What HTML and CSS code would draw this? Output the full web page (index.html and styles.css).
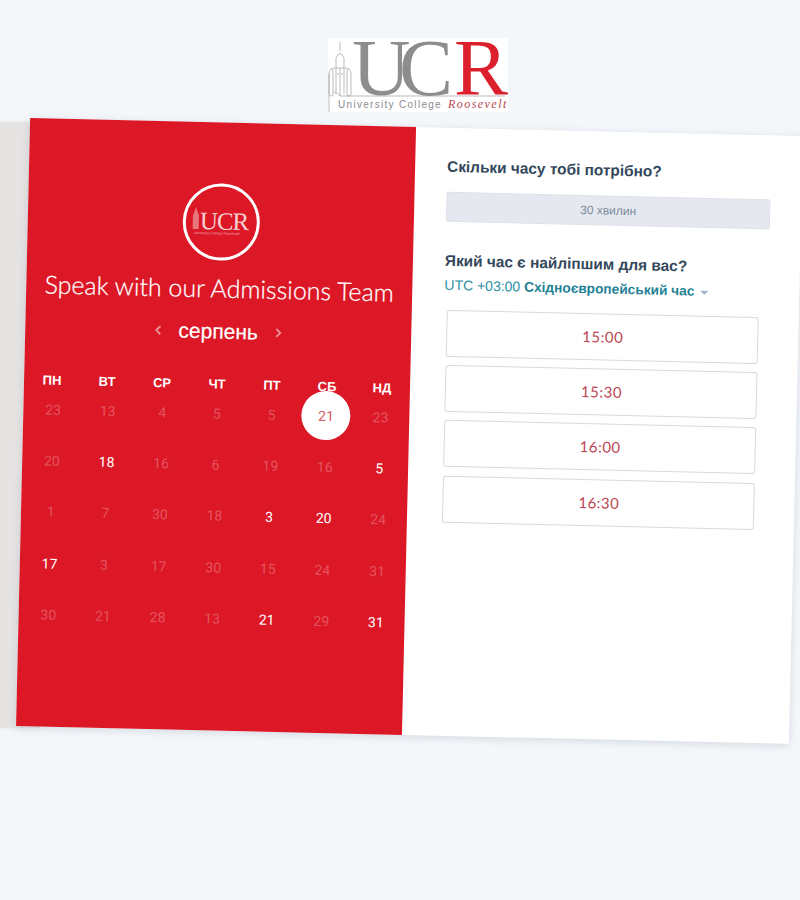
FILE: index.html
```html
<!DOCTYPE html>
<html lang="uk">
<head>
<meta charset="utf-8">
<title>Speak with our Admissions Team</title>
<link rel="stylesheet" href="styles.css">
</head>
<body>
<div class="side-band"></div>
<header class="logo-row">
  <svg class="logo" viewBox="0 0 180 74" width="180" height="74" aria-label="University College Roosevelt">
    <rect width="180" height="74" fill="#fff"/>
    <g fill="none" stroke="#a9a9ab" stroke-width="0.8">
      <path d="M1 74V36M12 4V13M8 20Q12 11 16 20M8 20V30M16 20V30M5 30H19M4 30Q1 32 1 36V56Q1 58 3 58Q5 58 5 56V36Q5 32 4 30M20 30Q23 32 23 36V56Q23 58 21 58Q19 58 19 56V36Q19 32 20 30M8 30V56M12 30V58M16 30V56M9 36H11M13 36H15M6 54Q10 55 12 58H177"/>
    </g>
    <g class="logo-big">
      <text x="24" y="57" class="logo-grey">U</text>
      <text x="71" y="57" class="logo-grey">C</text>
      <text x="126" y="57" class="logo-red">R</text>
    </g>
    <text x="10" y="70" class="logo-small">University College</text>
    <text x="120" y="70" class="logo-script">Roosevelt</text>
  </svg>
</header>
<main class="card">
  <section class="left">
    <div class="avatar">
      <svg viewBox="0 0 71 71" width="71" height="71" aria-hidden="true">
        <path d="M7 43V30Q7 28 8 27L10 21L12 27Q13 28 13 30V43Z" fill="#e8767d"/>
        <text x="14" y="43" class="mini-big">UCR</text>
        <text x="8" y="48" class="mini-small">University College Roosevelt</text>
      </svg>
    </div>
    <h1 class="title">Speak with our Admissions Team</h1>
    <div class="month-row">
      <svg class="chev" viewBox="0 0 8 12" width="8" height="12"><path d="M6 2L2 6L6 10"/></svg>
      <span class="month">серпень</span>
      <svg class="chev" viewBox="0 0 8 12" width="8" height="12"><path d="M2 2L6 6L2 10"/></svg>
    </div>
    <div class="weekdays">
      <span>ПН</span><span>ВТ</span><span>СР</span><span>ЧТ</span><span>ПТ</span><span>СБ</span><span>НД</span>
    </div>
    <div class="days">
      <span>23</span><span>13</span><span>4</span><span>5</span><span>5</span><span class="selected"><i>21</i></span><span>23</span>
      <span>20</span><span class="on">18</span><span>16</span><span>6</span><span>19</span><span>16</span><span class="on">5</span>
      <span>1</span><span>7</span><span>30</span><span>18</span><span class="on">3</span><span class="on">20</span><span>24</span>
      <span class="on">17</span><span>3</span><span>17</span><span>30</span><span>15</span><span>24</span><span>31</span>
      <span>30</span><span>21</span><span>28</span><span>13</span><span class="on">21</span><span>29</span><span class="on">31</span>
    </div>
  </section>
  <section class="right">
    <h2 class="q q-first">Скільки часу тобі потрібно?</h2>
    <div class="duration">30 хвилин</div>
    <h2 class="q q-second">Який час є найліпшим для вас?</h2>
    <div class="tz">UTC +03:00 <b>Східноєвропейський час</b><span class="caret"></span></div>
    <div class="slots">
      <div class="slot">15:00</div>
      <div class="slot">15:30</div>
      <div class="slot">16:00</div>
      <div class="slot">16:30</div>
    </div>
  </section>
</main>
</body>
</html>
```

FILE: styles.css
```css
html, body {
  margin: 0;
  height: 900px;
  overflow: hidden;
}
body {
  background: #f4f7fa;
  font-family: "Liberation Sans", Arial, sans-serif;
  position: relative;
}
.side-band {
  position: absolute;
  left: 0;
  top: 122px;
  width: 40px;
  height: 606px;
  background: #e6e3e3;
  box-shadow: 0 0 4px #e6e3e3;
}
.logo-row {
  display: flex;
  justify-content: center;
  padding: 38px 0 0 36px;
  height: 74px;
}
.logo {
  display: block;
  overflow: visible;
}
.logo-big text {
  font-family: "Liberation Serif", serif;
  font-size: 81px;
}
.logo-grey { fill: #8d8d90; }
.logo-red { fill: #dc1f2c; }
.logo-small {
  font-family: "Liberation Sans", sans-serif;
  font-size: 10px;
  letter-spacing: 1.3px;
  fill: #8b8b8e;
}
.logo-script {
  font-family: "Liberation Serif", serif;
  font-style: italic;
  font-size: 12px;
  letter-spacing: 1.45px;
  fill: #b9474e;
}
.card {
  position: relative;
  display: flex;
  width: 773px;
  height: 608px;
  margin: 15px 0 0 22.5px;
  transform: rotate(1.33deg);
  background: #fff;
  box-shadow: 0 2px 8px rgba(66, 91, 118, 0.18);
  border-radius: 0 0 2px 2px;
}
.left {
  width: 386px;
  background: #dc1726;
  color: #fff;
  padding-top: 61px;
  box-sizing: border-box;
}
.avatar {
  width: 71px;
  height: 71px;
  margin: 0 auto;
  border: 3px solid #fff;
  border-radius: 50%;
}
.avatar svg { display: block; }
.mini-big {
  font-family: "Liberation Serif", serif;
  font-size: 25px;
  letter-spacing: -1px;
  fill: #f6cfd1;
}
.mini-small {
  font-family: "Liberation Sans", sans-serif;
  font-size: 3.6px;
  fill: #f0a5aa;
}
.title {
  margin: 12px 0 0;
  font-family: Lato, sans-serif;
  font-weight: 300;
  font-size: 25px;
  line-height: 30px;
  text-align: center;
  white-space: nowrap;
  -webkit-text-stroke: 0.25px #fff;
}
.month-row {
  display: flex;
  justify-content: center;
  align-items: center;
  gap: 15px;
  margin-top: 14px;
  height: 30px;
}
.month {
  font-size: 21px;
  width: 82px;
  text-align: center;
  -webkit-text-stroke: 0.2px #fff;
}
.chev {
  fill: none;
  stroke: #f08a92;
  stroke-width: 2;
}
.weekdays, .days {
  display: grid;
  text-align: center;
  justify-content: center;
}
.weekdays {
  grid-template-columns: repeat(7, 55px);
  margin-top: 28px;
  font-size: 13px;
  font-weight: bold;
  line-height: 20px;
}
.days {
  grid-template-columns: repeat(7, 54.6px);
  grid-auto-rows: 51.3px;
  font-family: Roboto, sans-serif;
  font-size: 14px;
  color: rgba(255, 255, 255, 0.27);
  margin-top: -7px;
  padding-left: 1px;
}
.days span {
  display: flex;
  align-items: center;
  justify-content: center;
}
.days .on { color: #fff; }
.days i {
  font-style: normal;
  width: 49px;
  height: 49px;
  border-radius: 50%;
  background: #fff;
  color: #d95a66;
  display: flex;
  align-items: center;
  justify-content: center;
}
.right {
  flex: 1;
  padding: 29px 32px 0;
  box-sizing: border-box;
  min-width: 0;
}
.q {
  margin: 0;
  font-size: 15.4px;
  line-height: 19px;
  font-weight: bold;
  color: #33475b;
}
.duration {
  margin-top: 16px;
  height: 30px;
  width: 324px;
  box-sizing: border-box;
  line-height: 28px;
  text-align: center;
  font-size: 12px;
  color: #7b8a9a;
  background: #e5e8ef;
  border: 1px solid #dde2ea;
  border-radius: 2px;
}
.q-second { margin-top: 29px; }
.tz {
  margin-top: 5px;
  font-size: 14px;
  line-height: 20px;
  color: #2d8fa3;
  white-space: nowrap;
}
.tz b {
  color: #1f8295;
  font-size: 13.7px;
}
.caret {
  display: inline-block;
  margin-left: 6px;
  vertical-align: 1px;
  border: 4px solid transparent;
  border-top-color: #9fb0c2;
  border-bottom: 0;
}
.slots {
  display: flex;
  flex-direction: column;
  gap: 8.4px;
  margin: 13.5px 0 0 3px;
  width: 312px;
}
.slot {
  height: 47px;
  box-sizing: border-box;
  border: 1px solid #d5dae3;
  border-radius: 3px;
  background: #fff;
  font-family: Lato, sans-serif;
  font-size: 15px;
  letter-spacing: 0.5px;
  line-height: 45px;
  text-align: center;
  color: #bb4552;
  padding-left: 1px;
}
```
